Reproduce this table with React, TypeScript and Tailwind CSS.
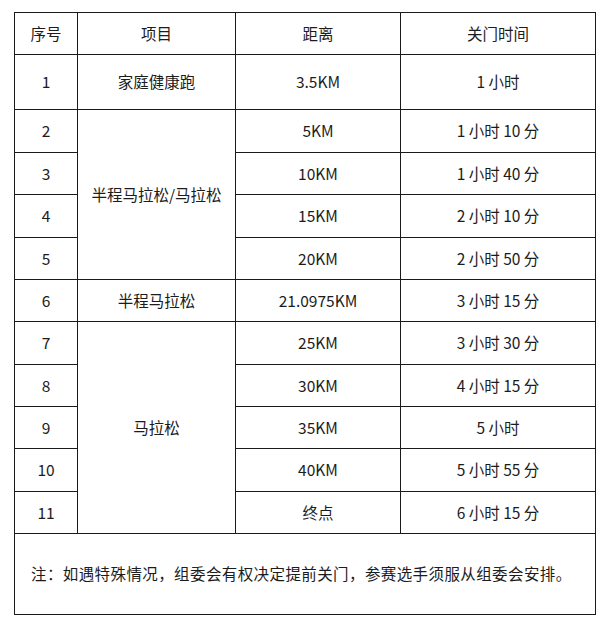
const rows: { no: string; item?: string; span?: number; dist: string; time: string; h: string }[] = [
  { no: '1', item: '家庭健康跑', span: 1, dist: '3.5KM', time: '1 小时', h: 'h-[55px]' },
  { no: '2', item: '半程马拉松/马拉松', span: 4, dist: '5KM', time: '1 小时 10 分', h: 'h-[43px]' },
  { no: '3', dist: '10KM', time: '1 小时 40 分', h: 'h-[42px]' },
  { no: '4', dist: '15KM', time: '2 小时 10 分', h: 'h-[43px]' },
  { no: '5', dist: '20KM', time: '2 小时 50 分', h: 'h-[42px]' },
  { no: '6', item: '半程马拉松', span: 1, dist: '21.0975KM', time: '3 小时 15 分', h: 'h-[42px]' },
  { no: '7', item: '马拉松', span: 5, dist: '25KM', time: '3 小时 30 分', h: 'h-[43px]' },
  { no: '8', dist: '30KM', time: '4 小时 15 分', h: 'h-[42px]' },
  { no: '9', dist: '35KM', time: '5 小时', h: 'h-[42px]' },
  { no: '10', dist: '40KM', time: '5 小时 55 分', h: 'h-[43px]' },
  { no: '11', dist: '终点', time: '6 小时 15 分', h: 'h-[42px]' },
]

const cell = 'border border-[#1a1a1a] text-center align-middle p-0'

export default function App() {
  return (
    <div className="w-[608px] h-[624px] bg-white pt-[12px] pl-[14px] font-['Noto_Sans_CJK_SC','Noto_Sans',sans-serif] text-[15.5px] text-[#1c1c1c]">
      <table className="border-collapse table-fixed w-[581px]">
        <colgroup>
          <col className="w-[63px]" />
          <col className="w-[158px]" />
          <col className="w-[165px]" />
          <col className="w-[195px]" />
        </colgroup>
        <tbody>
          <tr className="h-[42px]">
            <td className={cell}>序号</td>
            <td className={cell}>项目</td>
            <td className={cell}>距离</td>
            <td className={cell}>关门时间</td>
          </tr>
          {rows.map((r) => (
            <tr key={r.no} className={r.h}>
              <td className={cell}>{r.no}</td>
              {r.item && (
                <td className={cell} rowSpan={r.span}>
                  {r.item}
                </td>
              )}
              <td className={cell}>{r.dist}</td>
              <td className={cell}>{r.time}</td>
            </tr>
          ))}
          <tr className="h-[81px]">
            <td colSpan={4} className="border border-[#1a1a1a] align-middle pl-[16px] text-left tracking-[0.4px]">
              注：如遇特殊情况，组委会有权决定提前关门，参赛选手须服从组委会安排。
            </td>
          </tr>
        </tbody>
      </table>
    </div>
  )
}
